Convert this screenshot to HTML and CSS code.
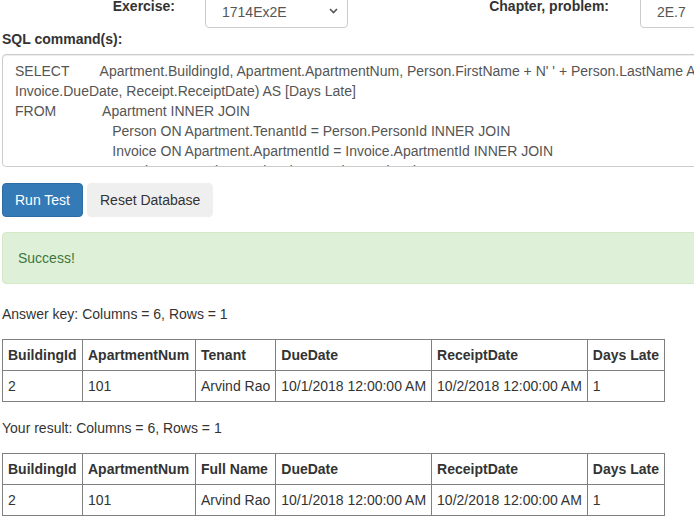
FILE: index.html
```html
<!DOCTYPE html>
<html>
<head>
<meta charset="utf-8">
<link rel="stylesheet" href="styles.css">
</head>
<body>
<div class="page">
  <div class="top-row">
    <label class="top-label ex-label">Exercise:</label>
    <div class="select">
      <span>1714Ex2E</span>
      <svg class="chev" width="9" height="6" viewBox="0 0 9 6"><path d="M1 1 L4.5 4.5 L8 1" fill="none" stroke="#555" stroke-width="1.6"/></svg>
    </div>
    <label class="top-label ch-label">Chapter, problem:</label>
    <div class="input">2E.7</div>
  </div>

  <label class="sql-label">SQL command(s):</label>
  <textarea class="sql" wrap="off" spellcheck="false">SELECT        Apartment.BuildingId, Apartment.ApartmentNum, Person.FirstName + N' ' + Person.LastName AS [Full Name], DATEDIFF(day, 
Invoice.DueDate, Receipt.ReceiptDate) AS [Days Late]
FROM            Apartment INNER JOIN
                         Person ON Apartment.TenantId = Person.PersonId INNER JOIN
                         Invoice ON Apartment.ApartmentId = Invoice.ApartmentId INNER JOIN
                         Receipt ON Invoice.InvoiceId = Receipt.InvoiceId</textarea>

  <div class="buttons">
    <button class="btn btn-primary">Run Test</button>
    <button class="btn btn-default">Reset Database</button>
  </div>

  <div class="alert">Success!</div>

  <div class="result-label">Answer key: Columns = 6, Rows = 1</div>
  <table class="result">
    <tr><th>BuildingId</th><th>ApartmentNum</th><th>Tenant</th><th>DueDate</th><th>ReceiptDate</th><th>Days Late</th></tr>
    <tr><td>2</td><td>101</td><td>Arvind Rao</td><td>10/1/2018 12:00:00 AM</td><td>10/2/2018 12:00:00 AM</td><td>1</td></tr>
  </table>

  <div class="result-label">Your result: Columns = 6, Rows = 1</div>
  <table class="result">
    <tr><th>BuildingId</th><th>ApartmentNum</th><th>Full Name</th><th>DueDate</th><th>ReceiptDate</th><th>Days Late</th></tr>
    <tr><td>2</td><td>101</td><td>Arvind Rao</td><td>10/1/2018 12:00:00 AM</td><td>10/2/2018 12:00:00 AM</td><td>1</td></tr>
  </table>
</div>
</body>
</html>
```

FILE: styles.css
```css
html, body {
  margin: 0;
  padding: 0;
  background: #fff;
  overflow: hidden;
}
body {
  font-family: "Liberation Sans", Arial, sans-serif;
  font-size: 14px;
  line-height: 20px;
  color: #333;
}
.page {
  width: 780px;
  padding-left: 2px;
}
.top-row {
  display: flex;
  align-items: flex-start;
  height: 34px;
  margin-top: -6px;
  margin-left: -2px;
}
.top-label {
  font-weight: bold;
  text-align: right;
  padding-top: 2px;
  line-height: 20px;
}
.ex-label {
  width: 175px;
}
.select {
  margin-left: 30px;
  width: 143px;
  height: 34px;
  box-sizing: border-box;
  border: 1px solid #ccc;
  border-radius: 4px;
  padding: 7px 9px 0 16px;
  display: flex;
  justify-content: space-between;
  align-items: flex-start;
  color: #555;
}
.chev {
  margin-top: 6px;
}
.ch-label {
  width: 261px;
}
.input {
  margin-left: 31px;
  width: 100px;
  height: 34px;
  box-sizing: border-box;
  border: 1px solid #ccc;
  border-radius: 4px;
  padding: 7px 0 0 16px;
  color: #555;
}
.sql-label {
  display: block;
  font-weight: bold;
  margin-top: 1px;
  margin-bottom: 5px;
}
.sql {
  display: block;
  width: 760px;
  height: 113px;
  box-sizing: border-box;
  margin: 0;
  padding: 6px 12px;
  border: 1px solid #ccc;
  border-radius: 4px;
  box-shadow: inset 0 1px 1px rgba(0,0,0,.075);
  font-family: "Liberation Sans", Arial, sans-serif;
  font-size: 14px;
  line-height: 20px;
  color: #555;
  resize: none;
  overflow: hidden;
  white-space: pre;
}
.buttons {
  display: flex;
  gap: 4px;
  margin-top: 16px;
}
.btn {
  font-family: "Liberation Sans", Arial, sans-serif;
  font-size: 14px;
  line-height: 20px;
  padding: 6px 12px;
  border: 1px solid transparent;
  border-radius: 4px;
  margin: 0;
}
.btn-primary {
  background: #337ab7;
  border-color: #2e6da4;
  color: #fff;
}
.btn-default {
  background: #efefef;
  border-color: #efefef;
  color: #333;
}
.alert {
  margin-top: 15px;
  margin-bottom: 20px;
  padding: 15px;
  background: #dff0d8;
  border: 1px solid #d6e9c6;
  border-radius: 4px;
  color: #3c763d;
}
.result-label {
  margin-bottom: 15px;
}
.result {
  border-collapse: collapse;
  margin-bottom: 16px;
}
.result th, .result td {
  border: 1px solid #808080;
  padding: 5px;
  text-align: left;
  white-space: nowrap;
}
.result th {
  font-weight: bold;
}
.result th:nth-child(1) { width: 69px; }
.result th:nth-child(2) { width: 102px; }
.result th:nth-child(3) { width: 69px; }
```
